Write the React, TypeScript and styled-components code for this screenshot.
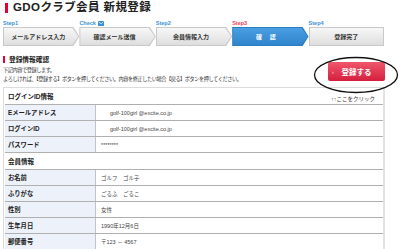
import { createGlobalStyle, styled } from 'styled-components';

const GlobalStyle = createGlobalStyle`
  html, body {
    margin: 0;
    padding: 0;
    background: #fff;
  }
  body {
    font-family: "Liberation Sans", "Noto Sans CJK JP", sans-serif;
    color: #333;
  }
`;

const Page = styled.div`
  position: relative;
  width: 400px;
  height: 249px;
  overflow: hidden;
  padding: 0 3px;
  box-sizing: border-box;
`;

const Main = styled.div`
  width: 382px;
`;

const TitleBar = styled.div`
  display: flex;
  align-items: center;
  gap: 5px;
  height: 15px;
  padding-left: 2px;
`;

const TitleMark = styled.span`
  width: 3px;
  height: 10px;
  background: #e60033;
`;

const TitleText = styled.h1`
  margin: 0;
  font-size: 11.5px;
  font-weight: bold;
  color: #222;
  letter-spacing: 0.4px;
  line-height: 15px;
`;

const StepLabels = styled.div`
  display: grid;
  grid-template-columns: repeat(5, 1fr);
  margin-top: 4px;
  height: 8px;
`;

const StepLabel = styled.span<{ $current?: boolean }>`
  display: flex;
  align-items: center;
  gap: 2px;
  font-size: 5.5px;
  font-weight: bold;
  line-height: 8px;
  color: ${(p) => (p.$current ? '#e8425a' : '#3a8fd6')};
`;

const Steps = styled.div`
  display: grid;
  grid-template-columns: repeat(5, 1fr);
  height: 19px;
`;

const chevron = 'polygon(0 0, calc(100% - 6px) 0, 100% 50%, calc(100% - 6px) 100%, 0 100%)';

const StepShape = styled.div<{ $active?: boolean; $last?: boolean }>`
  padding: 1px;
  margin-right: ${(p) => (p.$last ? '1px' : '0')};
  background: ${(p) => (p.$active ? '#2a7cc4' : '#c9c9c9')};
  clip-path: ${(p) => (p.$last ? 'none' : chevron)};
`;

const StepFace = styled.div<{ $active?: boolean; $last?: boolean }>`
  display: flex;
  align-items: center;
  justify-content: center;
  height: 17px;
  padding-right: ${(p) => (p.$last ? '0' : '6px')};
  background: ${(p) =>
    p.$active
      ? 'linear-gradient(#4a9fe2, #2f84cc)'
      : 'linear-gradient(#f7f7f7, #dedede)'};
  clip-path: ${(p) => (p.$last ? 'none' : chevron)};
  font-size: 6px;
  font-weight: bold;
  color: ${(p) => (p.$active ? '#fff' : '#333')};
  letter-spacing: ${(p) => (p.$active ? '3px' : '0')};
`;

const IntroRow = styled.div`
  display: flex;
  justify-content: space-between;
  align-items: flex-end;
  margin-top: 9px;
`;

const Heading = styled.h2`
  display: flex;
  align-items: center;
  gap: 4px;
  margin: 0;
  height: 8px;
  font-size: 6.7px;
  font-weight: bold;
  color: #222;
`;

const HeadingMark = styled.span`
  width: 2px;
  height: 7px;
  background: #e60033;
`;

const Lead = styled.p`
  margin: 3px 0 0;
  font-size: 5.2px;
  line-height: 8.5px;
  letter-spacing: -0.45px;
  color: #333;
`;

const SubmitButton = styled.button`
  position: relative;
  display: flex;
  align-items: center;
  justify-content: center;
  width: 57px;
  height: 19px;
  margin-bottom: 2px;
  padding: 0;
  border: none;
  border-radius: 2px;
  background: linear-gradient(#ef566c, #d41f3d);
  color: #fff;
  font-family: inherit;
  font-size: 7.5px;
  font-weight: bold;
  cursor: pointer;
`;

const ButtonArrow = styled.span`
  position: absolute;
  left: 4px;
  top: 50%;
  transform: translateY(-50%);
  font-size: 5px;
  color: #ffd0d6;
`;

const Callout = styled.svg`
  position: absolute;
  left: 313px;
  top: 56px;
  pointer-events: none;
`;

const Panel = styled.div`
  margin-top: 4px;
  height: 200px;
  border: 1px solid #dcdcdc;
  border-right: 2px solid #e2e2e2;
  border-bottom: none;
  box-sizing: border-box;
`;

const GroupHeader = styled.div<{ $height: number }>`
  display: flex;
  justify-content: space-between;
  height: ${(p) => p.$height}px;
  margin-left: 1px;
  padding-left: 3px;
  border-bottom: 1px solid #b0b0b0;
  box-sizing: border-box;
`;

const GroupTitle = styled.span`
  align-self: center;
  font-size: 6.5px;
  font-weight: bold;
  color: #222;
`;

const ClickHint = styled.span`
  align-self: flex-end;
  margin: 0 8px 1px 0;
  font-size: 5.5px;
  line-height: 7px;
  color: #333;
`;

const Row = styled.div`
  display: grid;
  grid-template-columns: 91px 1fr;
  height: 16px;
  margin-left: 1px;
  border-bottom: 1px solid #b0b0b0;
  box-sizing: border-box;
`;

const Label = styled.div`
  display: flex;
  align-items: center;
  padding-left: 3px;
  background: #edf1f9;
  border-right: 1px solid #c2c2c2;
  font-size: 6.3px;
  font-weight: bold;
  color: #222;
`;

const Value = styled.div<{ $indent?: boolean }>`
  display: flex;
  align-items: center;
  padding-left: ${(p) => (p.$indent ? '14px' : '5px')};
  font-size: 5.5px;
  color: #444;
`;

const MailIcon = () => (
  <svg width="6" height="5" viewBox="0 0 6 5">
    <rect x="0" y="0" width="6" height="5" rx="0.6" fill="#3a8fd6" />
    <path d="M0.8 1 L3 2.8 L5.2 1" stroke="#fff" strokeWidth="0.7" fill="none" />
  </svg>
);

const steps = ['メールアドレス入力', '確認メール送信', '会員情報入力', '確 認', '登録完了'];

const loginRows = [
  { label: 'Eメールアドレス', value: 'golf-100girl @excite.co.jp', indent: true },
  { label: 'ログインID', value: 'golf-100girl @excite.co.jp', indent: true },
  { label: 'パスワード', value: '********', indent: false },
];

const memberRows = [
  { label: 'お名前', value: 'ゴルフ　ゴル子' },
  { label: 'ふりがな', value: 'ごるふ　ごるこ' },
  { label: '性別', value: '女性' },
  { label: '生年月日', value: '1990年12月6日' },
  { label: '郵便番号', value: '〒123 － 4567' },
];

export default function App() {
  return (
    <Page>
      <GlobalStyle />
      <Main>
        <TitleBar>
          <TitleMark />
          <TitleText>GDOクラブ会員 新規登録</TitleText>
        </TitleBar>

        <StepLabels>
          <StepLabel>Step1</StepLabel>
          <StepLabel>
            Check <MailIcon />
          </StepLabel>
          <StepLabel>Step2</StepLabel>
          <StepLabel $current>Step3</StepLabel>
          <StepLabel>Step4</StepLabel>
        </StepLabels>

        <Steps>
          {steps.map((s, i) => (
            <StepShape key={s} $active={i === 3} $last={i === steps.length - 1}>
              <StepFace $active={i === 3} $last={i === steps.length - 1}>
                {s}
              </StepFace>
            </StepShape>
          ))}
        </Steps>

        <IntroRow>
          <div>
            <Heading>
              <HeadingMark />
              登録情報確認
            </Heading>
            <Lead>
              下記内容で登録します。
              <br />
              よろしければ、【登録する】ボタンを押してください。内容を修正したい場合【戻る】ボタンを押してください。
            </Lead>
          </div>
          <SubmitButton>
            <ButtonArrow>›</ButtonArrow>
            登録する
          </SubmitButton>
        </IntroRow>

        <Panel>
          <GroupHeader $height={17}>
            <GroupTitle>ログインID情報</GroupTitle>
            <ClickHint>↑↑ここをクリック</ClickHint>
          </GroupHeader>
          {loginRows.map((r) => (
            <Row key={r.label}>
              <Label>{r.label}</Label>
              <Value $indent={r.indent}>{r.value}</Value>
            </Row>
          ))}
          <GroupHeader $height={17}>
            <GroupTitle>会員情報</GroupTitle>
          </GroupHeader>
          {memberRows.map((r) => (
            <Row key={r.label}>
              <Label>{r.label}</Label>
              <Value>{r.value}</Value>
            </Row>
          ))}
        </Panel>
      </Main>

      <Callout width="86" height="38" viewBox="0 0 86 38">
        <ellipse cx="43" cy="19" rx="41.5" ry="17.5" fill="none" stroke="#111" strokeWidth="1.3" />
      </Callout>
    </Page>
  );
}
